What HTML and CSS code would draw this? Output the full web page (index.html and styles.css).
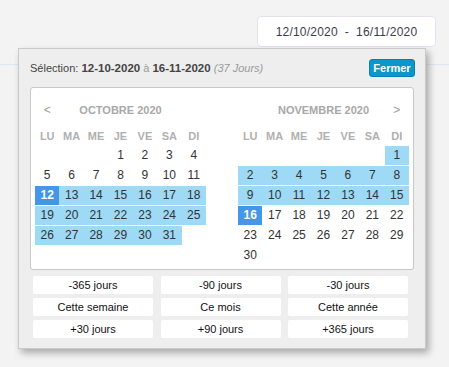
FILE: index.html
```html
<!DOCTYPE html>
<html lang="fr">
<head>
    <meta charset="UTF-8">
    <meta name="viewport" content="width=device-width, initial-scale=1.0">
    <title>Période</title>
    <link rel="stylesheet" href="styles.css">
</head>
<body>
    <div class="topbar">
        <div class="date-input">12/10/2020&nbsp; - &nbsp;16/11/2020</div>
    </div>

    <div class="picker">
        <div class="picker-head">
            <span class="selection">Sélection: <b>12-10-2020</b> <span class="muted">à</span> <b>16-11-2020</b> <i class="muted">(37 Jours)</i></span>
            <button class="close-btn">Fermer</button>
        </div>

        <div class="calendars">
            <div class="month">
                <div class="month-head">
                    <span class="nav">&lt;</span>
                    <span class="month-name">OCTOBRE 2020</span>
                    <span class="nav"></span>
                </div>
                <div class="weekdays">
                    <span>LU</span><span>MA</span><span>ME</span><span>JE</span><span>VE</span><span>SA</span><span>DI</span>
                </div>
                <div class="days">
                    <span class="start-4">1</span><span>2</span><span>3</span><span>4</span>
                    <span>5</span><span>6</span><span>7</span><span>8</span><span>9</span><span>10</span><span>11</span>
                    <span class="edge">12</span><span class="range">13</span><span class="range">14</span><span class="range">15</span><span class="range">16</span><span class="range">17</span><span class="range">18</span>
                    <span class="range">19</span><span class="range">20</span><span class="range">21</span><span class="range">22</span><span class="range">23</span><span class="range">24</span><span class="range">25</span>
                    <span class="range">26</span><span class="range">27</span><span class="range">28</span><span class="range">29</span><span class="range">30</span><span class="range">31</span>
                </div>
            </div>

            <div class="month">
                <div class="month-head">
                    <span class="nav"></span>
                    <span class="month-name">NOVEMBRE 2020</span>
                    <span class="nav">&gt;</span>
                </div>
                <div class="weekdays">
                    <span>LU</span><span>MA</span><span>ME</span><span>JE</span><span>VE</span><span>SA</span><span>DI</span>
                </div>
                <div class="days">
                    <span class="range start-7">1</span>
                    <span class="range">2</span><span class="range">3</span><span class="range">4</span><span class="range">5</span><span class="range">6</span><span class="range">7</span><span class="range">8</span>
                    <span class="range">9</span><span class="range">10</span><span class="range">11</span><span class="range">12</span><span class="range">13</span><span class="range">14</span><span class="range">15</span>
                    <span class="edge">16</span><span>17</span><span>18</span><span>19</span><span>20</span><span>21</span><span>22</span>
                    <span>23</span><span>24</span><span>25</span><span>26</span><span>27</span><span>28</span><span>29</span>
                    <span>30</span>
                </div>
            </div>
        </div>

        <div class="presets">
            <button class="preset">-365 jours</button>
            <button class="preset">-90 jours</button>
            <button class="preset">-30 jours</button>
            <button class="preset">Cette semaine</button>
            <button class="preset">Ce mois</button>
            <button class="preset">Cette année</button>
            <button class="preset">+30 jours</button>
            <button class="preset">+90 jours</button>
            <button class="preset">+365 jours</button>
        </div>
    </div>
</body>
</html>
```

FILE: styles.css
```css
* {
    margin: 0;
    padding: 0;
    box-sizing: border-box;
    font-family: 'Liberation Sans', Arial, sans-serif;
}

body {
    background-color: #f3f3f3;
    color: #333;
    position: relative;
    height: 367px;
    overflow: hidden;
}

.topbar {
    height: 65px;
    border-bottom: 1px solid #dfe5f1;
    display: flex;
    justify-content: flex-end;
    padding: 16px 13px 0 0;
}

.date-input {
    width: 179px;
    height: 31px;
    background-color: #fff;
    border: 1px solid #e1e4ee;
    border-radius: 4px;
    display: flex;
    align-items: center;
    justify-content: center;
    font-size: 12px;
    letter-spacing: 0.2px;
    color: #3b3d4b;
}

/* dropdown */
.picker {
    position: absolute;
    top: 48px;
    left: 18px;
    width: 408px;
    background-color: #eeeeee;
    border: 1px solid #c9c9c9;
    box-shadow: 3px 4px 7px rgba(0, 0, 0, 0.3);
    padding: 10px 11px 10px 11px;
}

.picker-head {
    display: flex;
    justify-content: space-between;
    align-items: center;
    height: 18px;
    margin-bottom: 10px;
}

.selection {
    font-size: 11px;
    color: #444;
}

.selection b {
    font-size: 11.5px;
    color: #444;
}

.muted {
    color: #9a9a9a;
}

.close-btn {
    width: 46px;
    height: 18px;
    margin-right: -1px;
    background-color: #0b96cc;
    border: 1px solid #0a80b0;
    border-radius: 3px;
    color: #fff;
    font-size: 11px;
    font-weight: bold;
}

.calendars {
    background-color: #fff;
    border: 1px solid #c8c8c8;
    border-radius: 3px;
    height: 183px;
    padding: 12px 4px 3px 4px;
    display: flex;
    justify-content: space-between;
}

.month {
    width: 171px;
}

.month-head, .weekdays, .days {
    display: grid;
    grid-template-columns: repeat(7, 1fr);
    text-align: center;
}

.month-head {
    height: 20px;
    line-height: 20px;
    color: #a8a8a8;
    font-size: 11px;
    font-weight: bold;
}

.month-head .nav {
    font-weight: normal;
    font-size: 12px;
    color: #9a9a9a;
}

.month-name {
    grid-column: span 5;
}

.weekdays {
    margin-top: 6px;
    height: 20px;
    line-height: 20px;
    font-size: 11px;
    font-weight: bold;
    color: #b0b0b0;
}

.days {
    grid-auto-rows: 19px;
    row-gap: 1px;
    line-height: 19px;
    font-size: 12px;
    color: #333;
}

.start-4 { grid-column-start: 4; }
.start-7 { grid-column-start: 7; }

.range {
    background-color: #9ed9f6;
}

.edge {
    background-color: #4496e6;
    color: #fff;
    font-weight: bold;
}

.presets {
    margin: 6px 0 0 3px;
    width: 375px;
    display: grid;
    grid-template-columns: repeat(3, 1fr);
    grid-auto-rows: 18px;
    column-gap: 7.5px;
    row-gap: 4px;
}

.preset {
    background-color: #fff;
    border: none;
    border-radius: 2px;
    font-size: 11px;
    color: #111;
}
```
